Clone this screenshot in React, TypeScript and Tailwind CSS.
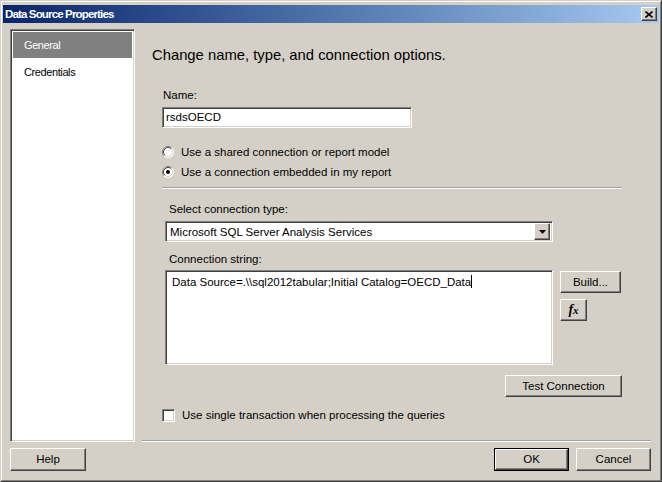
import React from 'react';

const raised =
  'bg-[#d4d0c8] border border-t-white border-l-white border-r-[#404040] border-b-[#404040] shadow-[inset_-1px_-1px_0_#808080]';
const sunken =
  'bg-white border border-t-[#808080] border-l-[#808080] border-r-white border-b-white shadow-[inset_1px_1px_0_#404040,inset_-1px_-1px_0_#d4d0c8]';

function WinButton({ children, className = '' }: { children: React.ReactNode; className?: string }) {
  return (
    <div className={`${raised} flex items-center justify-center text-[11.5px] text-black ${className}`}>
      {children}
    </div>
  );
}

function Radio({ checked }: { checked?: boolean }) {
  return (
    <svg width="12" height="12" viewBox="0 0 12 12" className="shrink-0">
      <circle cx="6" cy="6" r="5.5" fill="#fff" />
      <path d="M2.11 9.89 A5.5 5.5 0 0 1 9.89 2.11" stroke="#808080" fill="none" />
      <path d="M9.89 2.11 A5.5 5.5 0 0 1 2.11 9.89" stroke="#fff" fill="none" />
      <path d="M2.82 9.18 A4.5 4.5 0 0 1 9.18 2.82" stroke="#404040" fill="none" />
      <path d="M9.18 2.82 A4.5 4.5 0 0 1 2.82 9.18" stroke="#d4d0c8" fill="none" />
      {checked && <circle cx="6" cy="6" r="2" fill="#000" />}
    </svg>
  );
}

function Separator({ className = '' }: { className?: string }) {
  return <div className={`h-[2px] border-t border-b border-t-[#a0a0a0] border-b-white ${className}`} />;
}

export default function App() {
  return (
    <div className="w-[662px] h-[482px] bg-[#d4d0c8] border border-t-[#d4d0c8] border-l-[#d4d0c8] border-r-[#404040] border-b-[#404040] font-['Liberation_Sans',Arial,sans-serif] text-black overflow-hidden">
      <div className="h-full border border-t-white border-l-white border-r-[#808080] border-b-[#808080] px-px pt-[2px] flex flex-col">
        {/* Title bar */}
        <div className="h-[18px] mt-px flex items-center bg-gradient-to-r from-[#0a246a] to-[#a6caf0] pl-[2px] pr-[2px]">
          <span className="text-white font-bold text-[11.5px] tracking-[-0.85px] leading-[18px]">Data Source Properties</span>
          <div className={`${raised} ml-auto w-[16px] h-[14px] flex items-center justify-center`}>
            <svg width="8" height="7" viewBox="0 0 8 7">
              <path d="M0.5 0.5 L7.5 6.5 M7.5 0.5 L0.5 6.5" stroke="#000" strokeWidth="1.6" />
            </svg>
          </div>
        </div>

        {/* Main area */}
        <div className="flex h-[413px] mt-[6px]">
          {/* Navigation pane */}
          <div className={`${sunken} ml-[7px] w-[125px] h-full p-[2px] text-[11px] tracking-[-0.4px]`}>
            <div className="h-[26px] bg-[#808080] text-white leading-[26px] pl-[11px]">General</div>
            <div className="h-[26px] mt-px leading-[26px] pl-[11px]">Credentials</div>
          </div>

          {/* Content */}
          <div className="flex-1 flex flex-col">
            <div className="mt-[16px] pl-[17px] text-[14.8px] leading-[20px]">
              Change name, type, and connection options.
            </div>

            <div className="ml-[27px] w-[460px] text-[11.5px] leading-[15px]">
              <div className="mt-[23px] pl-[1px]">Name:</div>
              <div className={`${sunken} mt-[4px] w-[250px] h-[21px] pl-[3px] flex items-center`}>rsdsOECD</div>

              <div className="mt-[14px] h-[20px] flex items-center gap-[7px]">
                <Radio />
                <span>Use a shared connection or report model</span>
              </div>
              <div className="h-[20px] flex items-center gap-[7px]">
                <Radio checked />
                <span>Use a connection embedded in my report</span>
              </div>

              <Separator className="mt-[5px]" />

              <div className="ml-[3px] w-[457px]">
                <div className="mt-[13px] pl-[4px]">Select connection type:</div>
                <div className={`${sunken} mt-[4px] w-[388px] h-[21px] flex items-center p-[2px]`}>
                  <span className="flex-1 pl-[2px] pt-px">Microsoft SQL Server Analysis Services</span>
                  <div className={`${raised} w-[16px] h-[17px] flex items-center justify-center`}>
                    <svg width="7" height="4" viewBox="0 0 7 4">
                      <path d="M0 0 H7 L3.5 4 Z" fill="#000" />
                    </svg>
                  </div>
                </div>

                <div className="mt-[10px] pl-[4px]">Connection string:</div>
                <div className="mt-[3px] flex">
                  <div className={`${sunken} w-[388px] h-[95px] pl-[6px] pt-[4px]`}>
                    <span>Data Source=.\\sql2012tabular;Initial Catalog=OECD_Data</span>
                    <span className="inline-block w-px h-[13px] bg-black align-[-2px]" />
                  </div>
                  <div className="ml-[7px] flex flex-col">
                    <WinButton className="w-[61px] h-[22px] mt-[1px]">Build...</WinButton>
                    <WinButton className="w-[27px] h-[22px] mt-[6px]">
                      <span className="font-['Liberation_Serif',serif] italic font-bold text-[14px] leading-none">
                        f<span className="text-[11px]">x</span>
                      </span>
                    </WinButton>
                  </div>
                </div>

                <div className="mt-[10px] flex justify-end">
                  <WinButton className="w-[117px] h-[22px]">Test Connection</WinButton>
                </div>
              </div>

              <div className="mt-[8px] h-[20px] flex items-center gap-[7px]">
                <div className={`${sunken} w-[13px] h-[13px] shrink-0`} />
                <span>Use single transaction when processing the queries</span>
              </div>
            </div>

            <Separator className="mt-auto ml-[7px] mr-[8px]" />
          </div>
        </div>

        {/* Buttons */}
        <div className="flex mt-[6px] pl-[7px] pr-[8px]">
          <WinButton className="w-[76px] h-[23px]">Help</WinButton>
          <div className="ml-auto border border-black">
            <WinButton className="w-[73px] h-[21px]">OK</WinButton>
          </div>
          <WinButton className="ml-[7px] w-[75px] h-[23px]">Cancel</WinButton>
        </div>
      </div>
    </div>
  );
}
